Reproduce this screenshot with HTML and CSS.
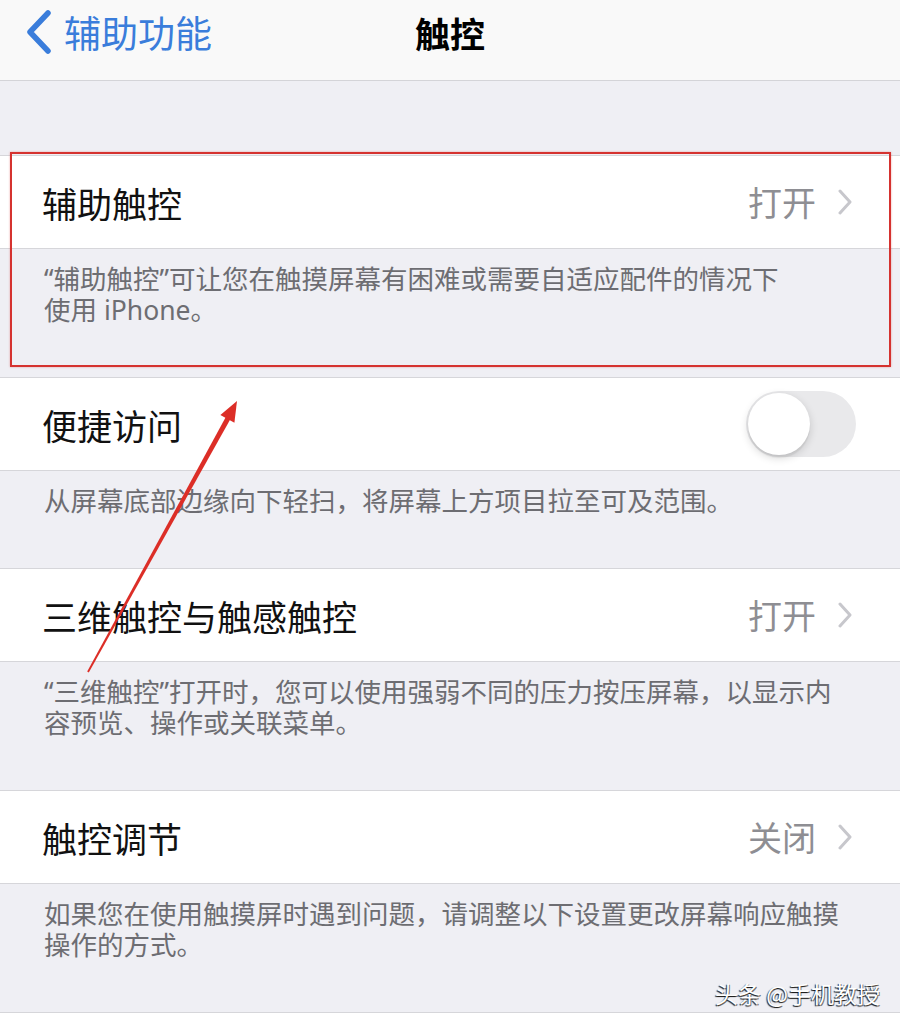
FILE: index.html
```html
<!DOCTYPE html>
<html lang="zh-CN">
<head>
<meta charset="utf-8">
<title>触控</title>
<link rel="stylesheet" href="styles.css">
</head>
<body>
<div class="page">
  <header class="nav">
    <a class="back">
      <svg class="back-icon" width="30" height="44" viewBox="0 0 30 44"><path d="M24 3 L6 22 L24 41" fill="none" stroke="#3a7ddb" stroke-width="5.5" stroke-linecap="round" stroke-linejoin="round"/></svg>
      <span class="back-text">辅助功能</span>
    </a>
    <h1 class="title">触控</h1>
  </header>

  <main class="list">
    <section class="group first">
      <div class="cell">
        <span class="label">辅助触控</span>
        <span class="value">打开</span>
        <svg class="chev" width="18" height="26" viewBox="0 0 18 26"><path d="M4 2 L14 13 L4 24" fill="none" stroke="#c7c7cc" stroke-width="3" stroke-linecap="round" stroke-linejoin="round"/></svg>
      </div>
      <p class="footer">“辅助触控”可让您在触摸屏幕有困难或需要自适应配件的情况下<br>使用 iPhone。</p>
    </section>

    <section class="group">
      <div class="cell">
        <span class="label">便捷访问</span>
        <span class="toggle"><span class="thumb"></span></span>
      </div>
      <p class="footer">从屏幕底部边缘向下轻扫，将屏幕上方项目拉至可及范围。</p>
    </section>

    <section class="group">
      <div class="cell">
        <span class="label">三维触控与触感触控</span>
        <span class="value">打开</span>
        <svg class="chev" width="18" height="26" viewBox="0 0 18 26"><path d="M4 2 L14 13 L4 24" fill="none" stroke="#c7c7cc" stroke-width="3" stroke-linecap="round" stroke-linejoin="round"/></svg>
      </div>
      <p class="footer">“三维触控”打开时，您可以使用强弱不同的压力按压屏幕，以显示内<br>容预览、操作或关联菜单。</p>
    </section>

    <section class="group">
      <div class="cell">
        <span class="label">触控调节</span>
        <span class="value">关闭</span>
        <svg class="chev" width="18" height="26" viewBox="0 0 18 26"><path d="M4 2 L14 13 L4 24" fill="none" stroke="#c7c7cc" stroke-width="3" stroke-linecap="round" stroke-linejoin="round"/></svg>
      </div>
      <p class="footer">如果您在使用触摸屏时遇到问题，请调整以下设置更改屏幕响应触摸<br>操作的方式。</p>
    </section>

    <section class="group">
      <div class="cell"></div>
    </section>
  </main>

  <div class="highlight"></div>
  <svg class="arrow" width="900" height="1025" viewBox="0 0 900 1025">
    <polygon points="88.8,672.4 230.6,418.7 226.2,416.3 87.2,671.6" fill="#dc2e27"/>
    <polygon points="237,401 234.4,422.8 220.4,415.0" fill="#dc2e27"/>
  </svg>
  <div class="watermark">头条 @手机教授</div>
</div>
</body>
</html>
```

FILE: styles.css
```css
html, body {
  margin: 0;
  padding: 0;
  overflow: hidden;
}

body {
  background: #efeff4;
  font-family: "Noto Sans CJK SC", "Noto Sans", sans-serif;
  color: #111;
}

.page {
  position: relative;
  width: 900px;
  height: 1025px;
  overflow: hidden;
  background: #efeff4;
}

.nav {
  height: 64px;
  padding-bottom: 16px;
  background: #f9f9f9;
  border-bottom: 1px solid #d4d4d8;
  display: flex;
  align-items: center;
  position: relative;
}

.back {
  display: flex;
  align-items: center;
  padding-left: 24px;
  gap: 10px;
}

.back-text {
  font-size: 37px;
  color: #3a7ddb;
  line-height: 1;
}

.title {
  position: absolute;
  left: 0;
  right: 0;
  top: 0;
  height: 64px;
  margin: 0;
  display: flex;
  align-items: center;
  justify-content: center;
  font-size: 35px;
  font-weight: 700;
  color: #000;
  pointer-events: none;
}

.list {
  display: flex;
  flex-direction: column;
}

.group.first {
  margin-top: 74px;
}

.cell {
  height: 92px;
  background: #fff;
  border-top: 1px solid #d6d6da;
  border-bottom: 1px solid #d6d6da;
  display: flex;
  align-items: center;
  padding: 0 44px;
}

.label {
  flex: 1;
  font-size: 35px;
  line-height: 1;
  color: #111;
  margin-left: -2px;
}

.value {
  font-size: 34px;
  line-height: 1;
  color: #8e8e93;
  margin-right: 20px;
}

.chev {
  margin-right: 2px;
}

.footer {
  margin: 0;
  padding: 15px 44px 51px;
  font-family: "Noto Sans", "Noto Sans CJK SC", sans-serif;
  font-size: 26.5px;
  line-height: 31px;
  color: #6d6d72;
}

.toggle {
  width: 110px;
  height: 66px;
  border-radius: 33px;
  background: #e9e9eb;
  position: relative;
  display: block;
}

.thumb {
  position: absolute;
  left: 2px;
  top: 2px;
  width: 62px;
  height: 62px;
  border-radius: 50%;
  background: #fff;
  box-shadow: 0 3px 8px rgba(0, 0, 0, 0.16), 0 3px 1px rgba(0, 0, 0, 0.05);
}

.highlight {
  position: absolute;
  left: 10px;
  top: 152px;
  width: 877px;
  height: 211px;
  border: 2px solid #d5322f;
  box-shadow: 0 0 2px rgba(213, 50, 47, 0.4);
  pointer-events: none;
}

.arrow {
  position: absolute;
  left: 0;
  top: 0;
  pointer-events: none;
}

.watermark {
  position: absolute;
  right: 20px;
  top: 978px;
  font-size: 23px;
  line-height: 30px;
  color: #fff;
  text-shadow: -1px 1px 1px rgba(0, 0, 0, 0.85), 1px 1px 0 rgba(0, 0, 0, 0.5);
}
```
